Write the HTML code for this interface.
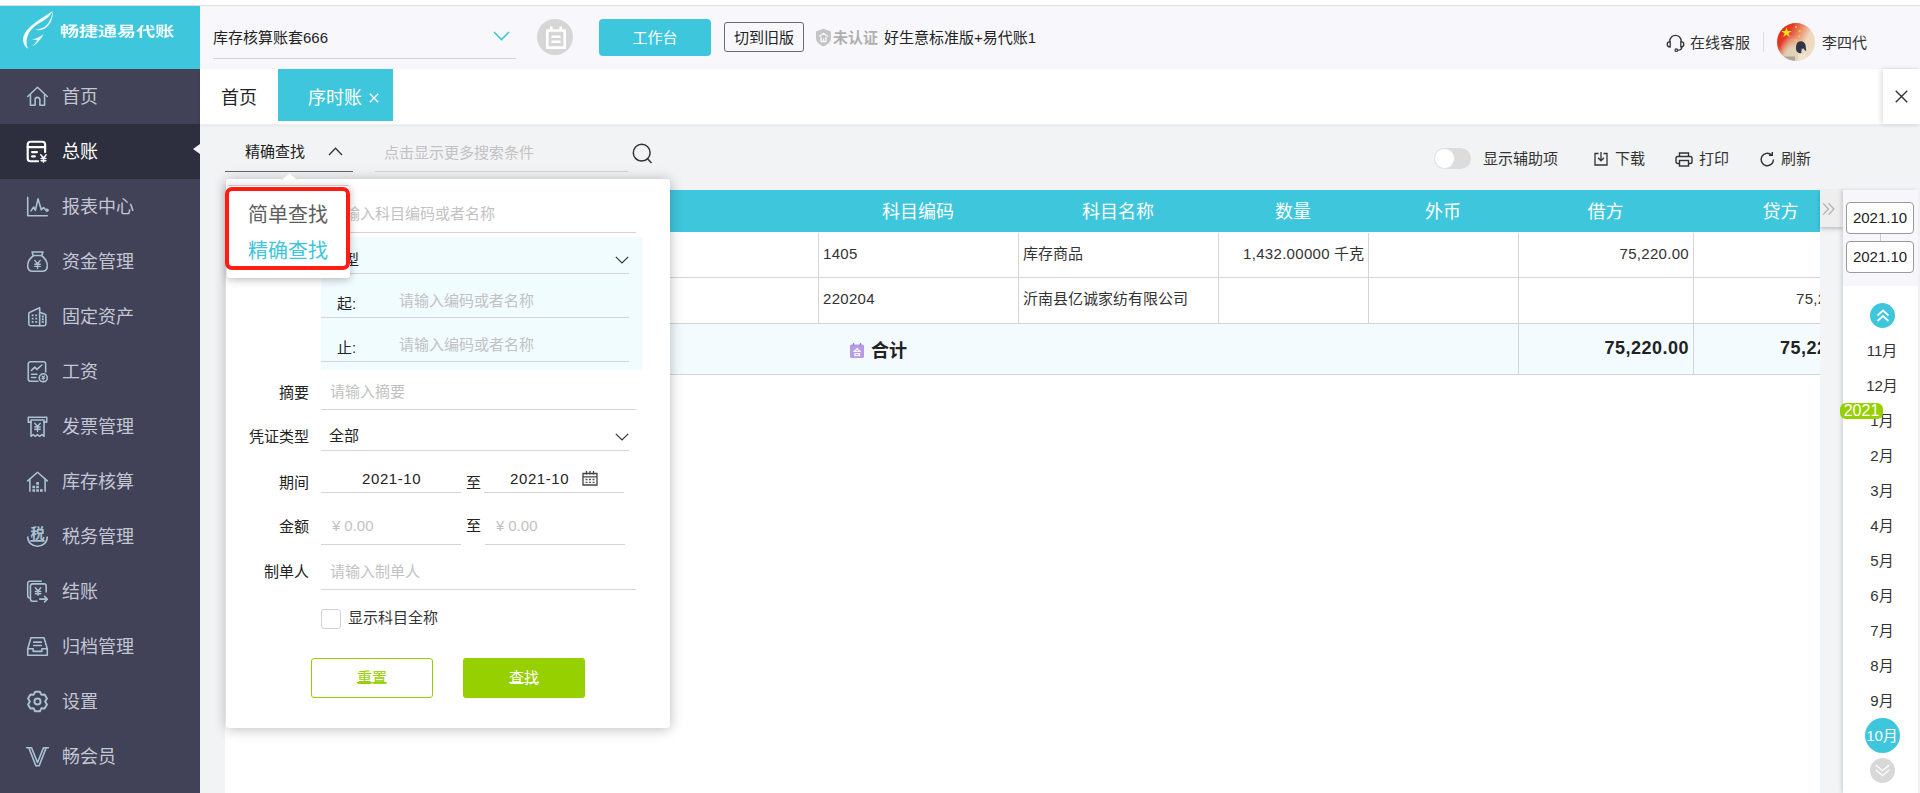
<!DOCTYPE html>
<html lang="zh-CN">
<head>
<meta charset="utf-8">
<title>序时账</title>
<style>
*{box-sizing:border-box;margin:0;padding:0}
html,body{width:1920px;height:793px;overflow:hidden;background:#fff}
body{font-family:"Liberation Sans","Noto Sans CJK SC",sans-serif;font-size:15px;color:#333;position:relative}
.a{position:absolute}
.t{position:absolute;white-space:nowrap;line-height:20px;height:20px}
svg{display:block;overflow:visible}

/* ---------- sidebar ---------- */
#side{left:0;top:6px;width:200px;height:787px;background:#414158}
#logo{left:0;top:0;width:200px;height:63px;background:#3ec6dc}
#logo .txt{left:60px;top:15px;font-size:14px;font-weight:700;color:#fff;line-height:20px;transform-origin:0 50%;transform:scaleX(1.36);letter-spacing:0;opacity:.93}
.mi{position:absolute;left:0;width:200px;height:55px;color:#c3c7d3;font-size:18px}
.mi .ic{position:absolute;left:25px;top:15px;width:25px;height:25px}
.mi .tx{position:absolute;left:62px;top:15px;line-height:26px;white-space:nowrap}
.mi.on{background:#2d2f3e;color:#fff}
.mi.on:after{content:"";position:absolute;right:0;top:20px;border:5.500px solid transparent;border-right:7px solid #f3f4f6;border-left:0}
.mi svg{stroke:#a9c3d3;fill:none;stroke-width:1.45;stroke-linecap:round;stroke-linejoin:round}
.mi.on svg{stroke:#fff}

/* ---------- header ---------- */
#topline{left:0;top:5px;width:1920px;height:1px;background:#dedee2}
#head{left:200px;top:6px;width:1720px;height:63px;background:#f8f8fc}
#tabs{left:200px;top:69px;width:1720px;height:55px;background:#fff;box-shadow:0 1px 3px rgba(0,0,0,.10)}
#main{left:200px;top:125px;width:1720px;height:668px;background:#f2f3f5}

/* ---------- table ---------- */
.th{position:absolute;top:0;height:42px;line-height:45px;text-align:center;color:#fff;font-size:18px;white-space:nowrap}
.vl{position:absolute;top:43px;width:1px;background:#d4d4d4}
.td{font-size:15px;color:#333}
.n{letter-spacing:.3px}
.r{text-align:right}
.tot{font-size:18px;font-weight:700;color:#222;line-height:26px;height:26px;letter-spacing:.5px}
.pbox{position:absolute;left:1646px;width:68px;height:32px;border:1px solid #9a9a9a;border-radius:4px;background:#fff;font-size:15px;line-height:30px;text-align:center;color:#222}
.mo{position:absolute;left:1643px;width:78px;text-align:center;font-size:15px;line-height:20px;color:#333;white-space:nowrap}

/* ---------- panel ---------- */
.ph{font-size:15px;color:#c2c2c2}
.lb{font-size:15px;color:#222}
.ul{position:absolute;height:1px;background:#d4d4d4}
</style>
</head>
<body>

<!-- ================= SIDEBAR ================= -->
<div id="side" class="a">
  <div id="logo" class="a">
    <svg class="a" style="left:21px;top:4px" width="34" height="40" viewBox="0 0 34 40">
      <path d="M31.800 1 C24 6 13 12.500 7 19 C2 24.500 .5 30 4 36 C5 37.500 6 38.300 7 38.700 C4.800 34 5.200 29 7.200 24.500 C10 18.500 16 14 22 11 C26 8.800 29.500 5 31.800 1 Z" fill="#fff" opacity=".96"/>
      <path d="M31.800 1 C32.300 8 29.500 15.500 23.500 18.800 C20.500 20.400 17 20.500 14 19.400 C18 19.300 21.500 18.300 24 16.500 C28 13.500 30.500 8 31.800 1 Z" fill="#fff" opacity=".9"/>
      <path d="M22.700 24 C20.500 28.500 17.500 32 13.500 35.300 L11.300 36.200 C13.200 34.500 15 32.300 16.300 30 L11 29.600 C15 28.800 19 27 22.700 24 Z" fill="#fff" opacity=".88"/>
    </svg>
    <div class="a txt">畅捷通易代账</div>
  </div>
  <!-- menu items inserted below -->
  <div class="mi" style="top:63px"><svg class="ic" viewBox="0 0 23 23"><path d="M2.5 11.5 L11.5 3 L20.5 11.5"/><path d="M5 10 V19.5 H9.3 V14.5 a2.2 2.2 0 0 1 4.4 0 V19.5 H18 V10"/></svg><span class="tx">首页</span></div>
  <div class="mi on" style="top:118px"><svg class="ic" viewBox="0 0 23 23"><path d="M12 20.5 H5 a2.5 2.5 0 0 1 -2.5 -2.5 V5 a2.5 2.5 0 0 1 2.5 -2.5 H16 a2.5 2.5 0 0 1 2.5 2.5 V12" stroke-width="2"/><path d="M2.5 7.5 H18.5" stroke-width="2"/><path d="M6.5 12 H11 M6.5 16 H9" stroke-width="2"/><path d="M14.5 14.5 L17 17.5 L19.5 14.5 M17 17.5 V21.5 M14.8 18 H19.2 M14.8 20 H19.2" stroke-width="1.3"/></svg><span class="tx">总账</span></div>
  <div class="mi" style="top:173px"><svg class="ic" viewBox="0 0 23 23"><path d="M2.5 3 V20 H20.5"/><path d="M5.5 15.5 L8 12 L9.5 15 L12 4.5 L15 14.5 L17 12.5 L19 14.5"/><circle cx="20.3" cy="15" r=".9"/></svg><span class="tx">报表中心</span></div>
  <div class="mi" style="top:228px"><svg class="ic" viewBox="0 0 23 23"><path d="M8 6 C3.5 9 2.2 13 2.5 16.5 C2.8 19.5 4.5 20.5 7 20.5 H16 C18.5 20.5 20.2 19.5 20.5 16.5 C20.8 13 19.500 9 15 6 Z"/><path d="M7.5 6 L6.500 2.800 H16.500 L15.500 6"/><path d="M9 10.500 L11.500 13.500 L14 10.500 M11.500 13.500 V18 M9 14 H14 M9 16 H14" stroke-width="1.3"/></svg><span class="tx">资金管理</span></div>
  <div class="mi" style="top:283px"><svg class="ic" viewBox="0 0 23 23"><path d="M3.500 18.500 V9 a1.500 1.500 0 0 1 1 -1.400 L13.500 3.500 V20 H5 a1.500 1.500 0 0 1 -1.500 -1.500 Z"/><path d="M13.500 7.500 L18.500 9.500 a1 1 0 0 1 .7 1 V18.500 a1.500 1.500 0 0 1 -1.500 1.500 H13.500"/><path d="M7 10.500 h.1 M10.300 10.500 h.1 M7 13.500 h.1 M10.300 13.500 h.1 M7 16.500 h.1 M10.300 16.500 h.1 M16.300 11.500 h.1 M16.300 14 h.1 M16.300 16.500 h.1" stroke-width="1.700" stroke-linecap="square"/></svg><span class="tx">固定资产</span></div>
  <div class="mi" style="top:338px"><svg class="ic" viewBox="0 0 23 23"><path d="M12 20.500 H5 a2 2 0 0 1 -2 -2 V4.500 a2 2 0 0 1 2 -2 H17 a2 2 0 0 1 2 2 V12"/><path d="M6 10.500 L9 7.500 L11 9.500 L15.500 5.500"/><path d="M6 14 H11 M6 17 H10" /><circle cx="16.800" cy="17.300" r="3.700"/><path d="M15.500 15.500 L16.800 17 L18.100 15.500 M16.800 17 V19.500 M15.500 17.800 H18.100" stroke-width="1"/></svg><span class="tx">工资</span></div>
  <div class="mi" style="top:393px"><svg class="ic" viewBox="0 0 23 23"><path d="M5.500 7.500 H3 V3 H20 V7.500 H17.500"/><path d="M5.500 5.500 V20.500 L7.500 19 L9.500 20.500 L11.500 19 L13.500 20.500 L15.500 19 L17.500 20.500 V5.500 Z"/><path d="M9 8.500 L11.500 11.500 L14 8.500 M11.500 11.500 V16 M9 12 H14 M9 14 H14" stroke-width="1.3"/></svg><span class="tx">发票管理</span></div>
  <div class="mi" style="top:448px"><svg class="ic" viewBox="0 0 23 23"><path d="M2.500 11 L11.500 3 L20.500 11"/><path d="M4.500 9.500 V20.500 M18.500 9.500 V20.500"/><path d="M11.500 13.200 h.1 M8 16.500 h.1 M11.500 16.500 h.1 M8 19.800 h.1 M11.500 19.800 h.1 M15 19.800 h.1" stroke-width="2.400" stroke-linecap="square"/></svg><span class="tx">库存核算</span></div>
  <div class="mi" style="top:503px"><svg class="ic" viewBox="0 0 23 23"><path d="M2.500 12 C2.500 17 6.500 20.500 11.500 20.500 C16.500 20.500 20.500 17 20.500 12"/><path d="M5.500 15.500 H17.500"/><text x="11.500" y="12.500" text-anchor="middle" font-size="13" font-weight="700" stroke="none" fill="#a9c3d3" font-family="'Liberation Sans','Noto Sans CJK SC',sans-serif">税</text></svg><span class="tx">税务管理</span></div>
  <div class="mi" style="top:558px"><svg class="ic" viewBox="0 0 23 23"><path d="M11 20.500 H7 a2 2 0 0 1 -2 -2 V6.500 a2 2 0 0 1 2 -2 H17.500 a2 2 0 0 1 2 2 V12"/><path d="M5 17.500 H4.500 a2 2 0 0 1 -2 -2 V4 a2 2 0 0 1 2 -2 H15"/><path d="M9.500 8 L12 11 L14.500 8 M12 11 V15 M9.500 11.500 H14.500 M9.500 13.500 H14.500" stroke-width="1.300"/><path d="M13.500 18.500 H20.500 M18 16 L20.500 18.500 L18 21"/></svg><span class="tx">结账</span></div>
  <div class="mi" style="top:613px"><svg class="ic" viewBox="0 0 23 23"><path d="M2.500 13.500 L5.500 3.500 H17.500 L20.500 13.500 V19.500 H2.500 Z"/><path d="M2.500 13.500 H7.500 V16 H15.500 V13.500 H20.500"/><path d="M8 7.500 H15 M8 10.500 H15"/></svg><span class="tx">归档管理</span></div>
  <div class="mi" style="top:668px"><svg class="ic" viewBox="0 0 23 23"><path d="M9.3 2.5 H13.700 L15 5.200 L18 5 L20.200 8.800 L18.500 11.500 L20.200 14.200 L18 18 L15 17.800 L13.700 20.500 H9.300 L8 17.800 L5 18 L2.800 14.200 L4.500 11.500 L2.800 8.800 L5 5 L8 5.200 Z" stroke-width="1.800"/><circle cx="11.500" cy="11.500" r="2.800" stroke-width="1.800"/></svg><span class="tx">设置</span></div>
  <div class="mi" style="top:723px"><svg class="ic" viewBox="0 0 23 23"><path d="M1.500 3.500 H6 L11.500 17 L17 3.500 H21.500 M3.500 3.500 L10 20 H13 L19.500 3.500" stroke-width="1.500"/></svg><span class="tx">畅会员</span></div>
</div>

<!-- ================= HEADER ================= -->
<div id="topline" class="a"></div>
<div id="head" class="a">

  <!-- coords inside #head are page coords minus (200,6) -->
  <div class="t" style="left:13px;top:22px;font-size:15px;color:#222">库存核算账套666</div>
  <div class="a" style="left:13px;top:52px;width:303px;height:1px;background:#d5d5d8"></div>
  <svg class="a" style="left:293px;top:25px" width="17" height="10" viewBox="0 0 17 10"><path d="M1 1 L8.500 8.500 L16 1" fill="none" stroke="#3ec6dc" stroke-width="1.600"/></svg>
  <div class="a" style="left:337px;top:13px;width:36px;height:36px;border-radius:50%;background:#d6d6d6">
    <svg class="a" style="left:8.500px;top:6.500px" width="20" height="23" viewBox="0 0 20 23"><path d="M1.300 4.500 H18.700 V21.600 H1.300 Z M5.300 .5 V4.500 M14.700 .5 V4.500 M5.500 10.700 H14.500 M5.500 15.700 H14.500" fill="none" stroke="#fff" stroke-width="2.600"/></svg>
  </div>
  <div class="a" style="left:399px;top:13px;width:112px;height:37px;background:#3ec6dc;border-radius:4px;color:#fff;font-size:15px;line-height:37px;text-align:center">工作台</div>
  <div class="a" style="left:524px;top:16px;width:80px;height:30px;border:1px solid #6a6a6a;border-radius:3px;color:#222;font-size:15px;line-height:29px;text-align:center;background:#f8f8fc">切到旧版</div>
  <svg class="a" style="left:615px;top:22px" width="17" height="19" viewBox="0 0 17 19"><path d="M8.500 .8 L16 3.500 V10 C16 14 12.500 16.800 8.500 18.300 C4.500 16.800 1 14 1 10 V3.500 Z" fill="#c4c4c4"/><path d="M4.200 8.500 L8.500 5.200 L12.800 8.500 M6 9 V13.500 H11 V9 M8.500 10.500 V13" fill="none" stroke="#f8f8fc" stroke-width="1.300"/></svg>
  <div class="t" style="left:633px;top:22px;font-size:15px;color:#b0b0b0;font-weight:700">未认证</div>
  <div class="t" style="left:684px;top:22px;font-size:15px;color:#222">好生意标准版+易代账1</div>

  <svg class="a" style="left:1466px;top:27px" width="19" height="19" viewBox="0 0 19 19"><path d="M3.800 8.800 V8 a5.700 5.700 0 0 1 11.400 0 V8.800" fill="none" stroke="#333" stroke-width="1.300"/><path d="M4.200 8.600 C2.200 8.600 1.200 9.800 1.200 11.300 C1.200 12.800 2.200 14 4.200 14 Z M14.800 8.600 C16.800 8.600 17.800 9.800 17.800 11.300 C17.800 12.800 16.800 14 14.800 14 Z" fill="none" stroke="#333" stroke-width="1.300" stroke-linejoin="round"/><path d="M15.800 14 C15.800 16.200 13.800 17.200 11.600 17.200" fill="none" stroke="#333" stroke-width="1.300"/><circle cx="10.300" cy="17.200" r="1.300" fill="none" stroke="#333" stroke-width="1.200"/></svg>
  <div class="t" style="left:1490px;top:27px;font-size:15px;color:#333">在线客服</div>
  <div class="a" style="left:1563px;top:26px;width:1px;height:20px;background:#dcdcdc"></div>
  <div class="a" id="avatar" style="left:1577px;top:17px;width:38px;height:38px;border-radius:50%;overflow:hidden;background:radial-gradient(ellipse at 40% 105%,#d9d2b4 0,rgba(225,215,185,.9) 25%,rgba(230,215,190,0) 50%),linear-gradient(118deg,#e12a17 0%,#e33a24 28%,#e98f70 48%,#efd6bd 66%,#eee2c8 100%)">
    <svg class="a" style="left:0;top:0" width="38" height="38" viewBox="0 0 38 38"><path d="M9.500 4.300 l1.300 3.700 h3.900 l-3.150 2.350 l1.200 3.800 l-3.250 -2.350 l-3.250 2.350 l1.200 -3.800 l-3.150 -2.350 h3.900 z" fill="#ffd91e"/><circle cx="19" cy="4" r="1.100" fill="#ffd21e"/><circle cx="22.700" cy="8" r="1.100" fill="#ffd21e"/><circle cx="22.400" cy="13.500" r="1" fill="#ffd21e"/><circle cx="18.600" cy="17.200" r="1" fill="#f8c83a"/><g filter="url(#avb)"><path d="M21 38 C21 31 23 27.500 26 27.500 C29 27.500 30 31 30.500 38 Z" fill="#f1e3cf"/><path d="M19.300 27.500 C18.300 21.500 20.500 18.300 23.800 18.300 C27 18.300 28.800 20.800 28.800 24 C28.800 26 29.300 27.300 29.200 28.300 C27.800 27.300 26.800 26.200 26 25 C25 26.500 24.500 28 24.500 30 C22.500 30.500 20.500 30 19.300 27.500 Z" fill="#2f3446"/><path d="M24.700 25.500 C25.500 26.800 26.500 27.800 27.500 28.500 C27 30 26 31 25 31 C24.500 29.500 24.400 27.500 24.700 25.500 Z" fill="#ecd3bf"/><path d="M7 33.500 H18 V38 H7 Z" fill="#77777a" opacity=".5"/></g><defs><filter id="avb" x="-20%" y="-20%" width="140%" height="140%"><feGaussianBlur stdDeviation=".55"/></filter></defs></svg>
  </div>
  <div class="t" style="left:1622px;top:27px;font-size:15px;color:#333">李四代</div>

</div>

<!-- ================= TABS ================= -->
<div id="main" class="a">

  <!-- inside #main: page coords minus (200,125) -->
  <!-- white table container -->
  <div class="a" style="left:25px;top:65px;width:1595px;height:603px;background:#fff"></div>

  <!-- toolbar left -->
  <div class="t" style="left:45px;top:17px;font-size:15px;color:#222">精确查找</div>
  <svg class="a" style="left:128px;top:22px" width="15" height="9" viewBox="0 0 15 9"><path d="M1 8 L7.500 1.300 L14 8" fill="none" stroke="#333" stroke-width="1.300"/></svg>
  <div class="a" style="left:25px;top:46px;width:128px;height:1px;background:#666"></div>
  <div class="t" style="left:184px;top:18px;font-size:15px;color:#c2c2c2">点击显示更多搜索条件</div>
  <div class="a" style="left:175px;top:46px;width:253px;height:1px;background:#d4d4d4"></div>
  <svg class="a" style="left:432px;top:18px" width="21" height="21" viewBox="0 0 21 21"><circle cx="9.700" cy="9.700" r="8.400" fill="none" stroke="#333" stroke-width="1.500"/><path d="M15.500 15.800 L19.500 20" stroke="#333" stroke-width="1.500" fill="none"/></svg>

  <!-- toolbar right -->
  <div class="a" style="left:1234px;top:23px;width:37px;height:21px;border-radius:11px;background:#dcdcdc"></div>
  <div class="a" style="left:1234px;top:23px;width:21px;height:21px;border-radius:50%;background:#fff;border:1px solid #e2e2e2"></div>
  <div class="t" style="left:1283px;top:24px;font-size:15px;color:#333">显示辅助项</div>
  <svg class="a" style="left:1394px;top:27px" width="14" height="14" viewBox="0 0 14 14"><path d="M4.500 1.500 H1 V13 H13 V1.500 H9.500" fill="none" stroke="#333" stroke-width="1.300"/><path d="M7 0 V8.500 M4 5.800 L7 8.800 L10 5.800" fill="none" stroke="#333" stroke-width="1.300"/></svg>
  <div class="t" style="left:1415px;top:24px;font-size:15px;color:#333">下载</div>
  <svg class="a" style="left:1475px;top:27px" width="18" height="15" viewBox="0 0 18 15"><path d="M4.500 4.500 V1 H13.500 V4.500" fill="none" stroke="#333" stroke-width="1.400"/><rect x="1" y="4.500" width="16" height="7" rx="1.800" fill="none" stroke="#333" stroke-width="1.400"/><rect x="4.500" y="8.500" width="9" height="5.500" fill="#f2f3f5" stroke="#333" stroke-width="1.400"/></svg>
  <div class="t" style="left:1499px;top:24px;font-size:15px;color:#333">打印</div>
  <svg class="a" style="left:1560px;top:27px" width="15" height="15" viewBox="0 0 15 15"><path d="M13.500 7.500 A6.200 6.200 0 1 1 11.600 3" fill="none" stroke="#333" stroke-width="1.400"/><path d="M9 3.300 H12.300 V0" fill="none" stroke="#333" stroke-width="1.400"/></svg>
  <div class="t" style="left:1581px;top:24px;font-size:15px;color:#333">刷新</div>

  <!-- table -->
  <div id="tbl" class="a" style="left:25px;top:65px;width:1595px;height:250px;overflow:hidden">
    <div class="a" style="left:1px;top:0;width:1700px;height:42px;background:#3ec6dc"></div>
    <div class="th" style="left:593px;width:200px">科目编码</div>
    <div class="th" style="left:793px;width:200px">科目名称</div>
    <div class="th" style="left:993px;width:150px">数量</div>
    <div class="th" style="left:1143px;width:150px">外币</div>
    <div class="th" style="left:1293px;width:175px">借方</div>
    <div class="th" style="left:1468px;width:175px">贷方</div>
    <!-- rows -->
    <div class="a" style="left:1px;top:87px;width:1700px;height:1px;background:#d4d4d4"></div>
    <div class="a" style="left:1px;top:133px;width:1700px;height:52px;background:#f3fbfe;border-top:1px solid #d4d4d4;border-bottom:1px solid #d4d4d4"></div>
    <div class="vl" style="left:593px;height:91px"></div>
    <div class="vl" style="left:793px;height:91px"></div>
    <div class="vl" style="left:993px;height:91px"></div>
    <div class="vl" style="left:1143px;height:91px"></div>
    <div class="vl" style="left:1293px;height:142px"></div>
    <div class="vl" style="left:1468px;height:142px"></div>
    <div class="t td n" style="left:598px;top:54px">1405</div>
    <div class="t td" style="left:798px;top:54px">库存商品</div>
    <div class="t td r" style="right:456px;top:54px"><span class="n">1,432.00000</span> 千克</div>
    <div class="t td r n" style="right:131px;top:54px">75,220.00</div>
    <div class="t td n" style="left:598px;top:99px">220204</div>
    <div class="t td" style="left:798px;top:99px">沂南县亿诚家纺有限公司</div>
    <div class="t td n" style="left:1571px;top:99px">75,220.00</div>
    <svg class="a" style="left:624px;top:153px" width="16" height="16" viewBox="0 0 16 16"><path d="M2.500 1.500 H13.500 a1.500 1.500 0 0 1 1.500 1.500 V13.500 a1.500 1.500 0 0 1 -1.500 1.500 H2.500 a1.500 1.500 0 0 1 -1.500 -1.500 V3 a1.500 1.500 0 0 1 1.500 -1.500 Z" fill="#b79be6"/><path d="M4.500 0 V3 M11.500 0 V3" stroke="#9a7fd4" stroke-width="1.400"/><text x="8" y="12.300" text-anchor="middle" font-size="8.500" font-weight="700" fill="#fff" font-family="'Liberation Sans','Noto Sans CJK SC',sans-serif">合</text></svg>
    <div class="t" style="left:646px;top:148px;font-size:18px;font-weight:700;line-height:26px;height:26px;color:#222">合计</div>
    <div class="t tot r" style="right:131px;top:145px">75,220.00</div>
    <div class="t tot" style="left:1555px;top:145px">75,220.00</div>
  </div>

  <!-- right strip -->
  <div class="a" style="left:1620px;top:65px;width:23px;height:603px;background:#f3f4f6"></div>
  <div class="a" style="left:1620px;top:65px;width:23px;height:37px;background:#eeeeef;box-shadow:0 2px 4px rgba(0,0,0,.22)"></div>
  <svg class="a" style="left:1622px;top:77px" width="13" height="14" viewBox="0 0 12 12" preserveAspectRatio="none"><path d="M1 1 L6 6 L1 11 M6 1 L11 6 L6 11" fill="none" stroke="#b4b4b4" stroke-width="1.200"/></svg>

  <!-- month panel -->
  <div class="a" style="left:1643px;top:65px;width:75px;height:603px;background:#fff;box-shadow:-2px 0 4px rgba(0,0,0,.13)"></div>
  <div class="a" style="left:1643px;top:65px;width:75px;height:96px;background:#f7f7fb"></div>
  <div class="a" style="left:1680px;top:108px;width:1px;height:9px;background:#ccc"></div>
  <div class="pbox" style="top:77px">2021.10</div>
  <div class="pbox" style="top:116px">2021.10</div>
  <div class="a" style="left:1670px;top:178px;width:25px;height:25px;border-radius:50%;background:#3ec6dc"></div>
  <svg class="a" style="left:1675.500px;top:183.500px" width="14" height="14" viewBox="0 0 14 14"><path d="M1.500 6.500 L7 1.500 L12.500 6.500 M1.500 12 L7 7 L12.500 12" fill="none" stroke="#fff" stroke-width="1.700"/></svg>
  <div class="mo" style="top:216px">11月</div>
  <div class="mo" style="top:251px">12月</div>
  <div class="mo" style="top:286px">1月</div>
  <div class="mo" style="top:321px">2月</div>
  <div class="mo" style="top:356px">3月</div>
  <div class="mo" style="top:391px">4月</div>
  <div class="mo" style="top:426px">5月</div>
  <div class="mo" style="top:461px">6月</div>
  <div class="mo" style="top:496px">7月</div>
  <div class="mo" style="top:531px">8月</div>
  <div class="mo" style="top:566px">9月</div>
  <div class="a" style="left:1665px;top:593px;width:35px;height:35px;border-radius:50%;background:#3ec6dc"></div>
  <div class="mo" style="top:601px;color:#fff">10月</div>
  <div class="a" style="left:1670px;top:633px;width:25px;height:25px;border-radius:50%;background:#d8d8d8"></div>
  <svg class="a" style="left:1675px;top:639px" width="15" height="13" viewBox="0 0 15 13"><path d="M.8 1 L7.500 6.800 L14.200 1 M.8 6 L7.500 11.800 L14.200 6" fill="none" stroke="#fff" stroke-width="1.200"/></svg>
  <div class="a" style="left:1640px;top:278px;width:43px;height:16px;border-radius:6px;background:#96d000;color:#fff;font-size:16px;line-height:16px;text-align:center">2021</div>

</div>
<div id="tabs" class="a">

  <div class="t" style="left:21px;top:16px;font-size:18px;line-height:26px;height:26px;color:#222">首页</div>
  <div class="a" style="left:78px;top:0;width:115px;height:52px;background:#3ec6dc"></div>
  <div class="t" style="left:108px;top:16px;font-size:18px;line-height:26px;height:26px;color:#fff">序时账</div>
  <svg class="a" style="left:169px;top:24px" width="10" height="10" viewBox="0 0 10 10"><path d="M.8 .8 L9.200 9.200 M9.200 .8 L.8 9.200" stroke="#fff" stroke-width="1.400" fill="none"/></svg>
  <div class="a" style="left:1683px;top:0;width:37px;height:55px;background:#fff;box-shadow:-2px 0 5px rgba(0,0,0,.12)"></div>
  <svg class="a" style="left:1694.500px;top:21px" width="13" height="13" viewBox="0 0 14 14"><path d="M.8 .8 L13.200 13.200 M13.200 .8 L.8 13.200" stroke="#333" stroke-width="1.500" fill="none"/></svg>

</div>


<!-- ================= SEARCH PANEL (page coords) ================= -->
<div id="panel" class="a" style="left:226px;top:179px;width:444px;height:549px;background:#fff;border-radius:3px;box-shadow:0 1px 13px rgba(0,0,0,.27)">
  <!-- coords inside panel = page - (226,179) -->
  <svg class="a" style="left:55px;top:-6px" width="17" height="7" viewBox="0 0 17 7"><path d="M0 7 L8.500 0 L17 7 Z" fill="#fff"/><path d="M0 7 L8.500 .3 L17 7" fill="none" stroke="#e2e2e2" stroke-width=".8"/></svg>

  <div class="t ph" style="left:104px;top:25px">请输入科目编码或者名称</div>
  <div class="ul" style="left:95px;top:53px;width:315px"></div>

  <div class="a" style="left:95px;top:58px;width:322px;height:133px;background:#f0fcff"></div>
  <div class="t lb" style="left:103px;top:71px">类型</div>
  <svg class="a cv" style="left:389px;top:77px" width="14" height="8" viewBox="0 0 14 8"><path d="M.8 .8 L7 7 L13.200 .8" fill="none" stroke="#333" stroke-width="1.200"/></svg>
  <div class="ul" style="left:95px;top:94px;width:308px"></div>
  <div class="t lb" style="left:111px;top:115px">起:</div>
  <div class="t ph" style="left:173px;top:112px">请输入编码或者名称</div>
  <div class="ul" style="left:95px;top:138px;width:308px"></div>
  <div class="t lb" style="left:111px;top:159px">止:</div>
  <div class="t ph" style="left:173px;top:156px">请输入编码或者名称</div>
  <div class="ul" style="left:95px;top:182px;width:308px"></div>

  <div class="t lb" style="left:53px;top:204px">摘要</div>
  <div class="t ph" style="left:104px;top:203px">请输入摘要</div>
  <div class="ul" style="left:95px;top:230px;width:315px"></div>

  <div class="t lb" style="left:23px;top:248px">凭证类型</div>
  <div class="t lb" style="left:103px;top:247px">全部</div>
  <svg class="a cv" style="left:389px;top:254px" width="14" height="8" viewBox="0 0 14 8"><path d="M.8 .8 L7 7 L13.200 .8" fill="none" stroke="#333" stroke-width="1.200"/></svg>
  <div class="ul" style="left:95px;top:271px;width:308px"></div>

  <div class="t lb" style="left:53px;top:294px">期间</div>
  <div class="t lb" style="left:136px;top:290px;letter-spacing:.6px">2021-10</div>
  <div class="ul" style="left:95px;top:313px;width:140px"></div>
  <div class="t lb" style="left:240px;top:294px">至</div>
  <div class="t lb" style="left:284px;top:290px;letter-spacing:.6px">2021-10</div>
  <svg class="a" style="left:356px;top:292px" width="16" height="15" viewBox="0 0 16 15"><path d="M1 2.500 H15 V14 H1 Z M1 5.800 H15" fill="none" stroke="#444" stroke-width="1.300"/><path d="M4.500 0 V3.500 M11.500 0 V3.500 M8 0 V3.500" stroke="#444" stroke-width="1.300"/><path d="M3.500 8.500 H5.500 M7 8.500 H9 M10.500 8.500 H12.500 M3.500 11.300 H5.500 M7 11.300 H9 M10.500 11.300 H12.500" stroke="#555" stroke-width="1.300"/></svg>
  <div class="ul" style="left:258px;top:313px;width:140px"></div>

  <div class="t lb" style="left:53px;top:338px">金额</div>
  <div class="t ph" style="left:106px;top:337px"><span style="margin-right:4px">¥</span>0.00</div>
  <div class="ul" style="left:95px;top:365px;width:140px"></div>
  <div class="t lb" style="left:240px;top:337px">至</div>
  <div class="t ph" style="left:270px;top:337px"><span style="margin-right:4px">¥</span>0.00</div>
  <div class="ul" style="left:259px;top:365px;width:140px"></div>

  <div class="t lb" style="left:38px;top:383px">制单人</div>
  <div class="t ph" style="left:104px;top:383px">请输入制单人</div>
  <div class="ul" style="left:95px;top:410px;width:315px"></div>

  <div class="a" style="left:95px;top:430px;width:20px;height:20px;border:1px solid #d2d2d2;border-radius:3px;background:#fff"></div>
  <div class="t lb" style="left:122px;top:429px;color:#333">显示科目全称</div>

  <div class="a" style="left:85px;top:479px;width:122px;height:40px;border:1px solid #96d000;border-radius:3px;color:#96d000;font-size:15px;line-height:38px;text-align:center;text-decoration:underline;text-decoration-thickness:1px;text-underline-offset:-.5px">重置</div>
  <div class="a" style="left:237px;top:479px;width:122px;height:40px;background:#96d000;border-radius:3px;color:#fff;font-size:15px;line-height:40px;text-align:center;text-decoration:underline;text-decoration-thickness:1px;text-underline-offset:-.5px">查找</div>
</div>

<!-- small mode dropdown + red annotation -->
<div class="a" style="left:226.500px;top:185px;width:123px;height:93px;background:#fff;border-radius:3px;border-top:1px solid #c4c4c4;box-shadow:0 2px 8px rgba(0,0,0,.26)"></div>
<div class="t" style="left:248px;top:200px;font-size:20px;line-height:30px;height:30px;color:#5e5e5e">简单查找</div>
<div class="t" style="left:248px;top:236px;font-size:20px;line-height:30px;height:30px;color:#3ec6dc">精确查找</div>
<div class="a" style="left:225px;top:187px;width:125px;height:83px;border:4px solid #ff1c10;border-radius:7px"></div>


</body>
</html>
